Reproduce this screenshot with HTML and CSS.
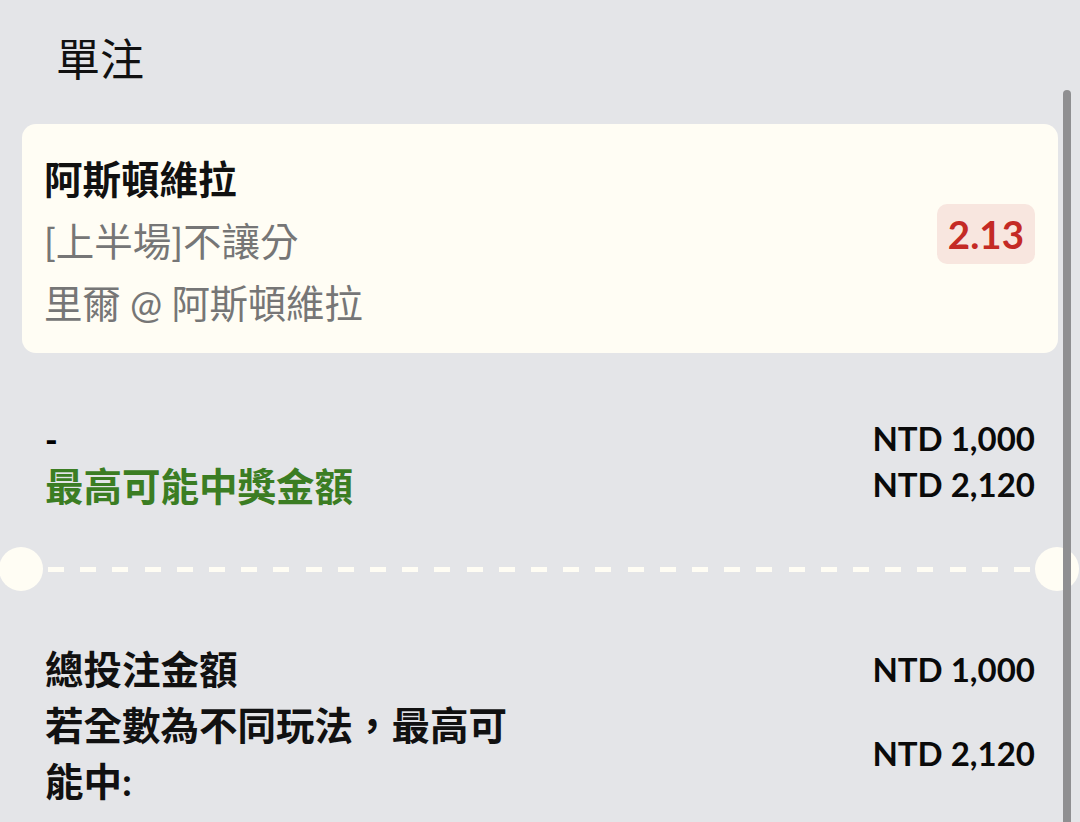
FILE: index.html
```html
<!DOCTYPE html>
<html lang="zh-Hant">
<head>
    <meta charset="UTF-8">
    <meta name="viewport" content="width=device-width, initial-scale=1.0">
    <title>單注</title>
    <link rel="stylesheet" href="styles.css">
</head>
<body>
    <div class="slip">
        <h2 class="slip-title">單注</h2>

        <div class="bet-card">
            <div class="bet-info">
                <div class="bet-pick">阿斯頓維拉</div>
                <div class="bet-market">[上半場]不讓分</div>
                <div class="bet-match">里爾 @ 阿斯頓維拉</div>
            </div>
            <div class="odds">2.13</div>
        </div>

        <div class="stake-rows">
            <div class="stake-label dash">-</div>
            <div class="amount">NTD 1,000</div>
            <div class="stake-label win">最高可能中獎金額</div>
            <div class="amount">NTD 2,120</div>
        </div>

        <div class="divider">
            <span class="notch left"></span>
            <span class="notch right"></span>
        </div>

        <div class="totals">
            <div class="total-label">總投注金額</div>
            <div class="amount">NTD 1,000</div>
            <div class="total-label">若全數為不同玩法，最高可能中:</div>
            <div class="amount">NTD 2,120</div>
        </div>
    </div>

    <!-- overlay scrollbar -->
    <div class="scrollbar"></div>
</body>
</html>
```

FILE: styles.css
```css
body {
    margin: 0;
    background: #e4e5e8;
    font-family: Lato, "Noto Sans CJK TC", sans-serif;
    color: #111;
    overflow: hidden;
}
.slip {
    padding: 0 22px;
}
.slip-title {
    margin: 0 0 34px;
    padding: 28px 0 0 34px;
    font-size: 44px;
    font-weight: 400;
    line-height: 62px;
}
.bet-card {
    display: flex;
    align-items: center;
    justify-content: space-between;
    background: #fffdf4;
    border-radius: 14px;
    padding: 24px 23px 19px 22px;
}
.bet-info {
    font-size: 38.5px;
    line-height: 62px;
    color: #767676;
}
.bet-pick {
    color: #111;
    font-weight: 700;
}
.bet-match {
    letter-spacing: -0.3px;
}
.odds {
    background: #f8e6df;
    color: #c42a25;
    font-weight: 700;
    font-size: 38.5px;
    line-height: 44px;
    padding: 8px 11px;
    border-radius: 10px;
    margin-bottom: 14px;
}
.stake-rows {
    display: grid;
    grid-template-columns: 1fr auto;
    grid-auto-rows: 46px;
    align-items: center;
    margin: 62px 23px 0 23px;
}
.stake-label {
    font-size: 38.5px;
    font-weight: 700;
}
.stake-label.dash {
    font-size: 34px;
    font-weight: 900;
    color: #000;
}
.stake-label.win {
    color: #3b7d23;
}
.amount {
    font-size: 33px;
    font-weight: 700;
    text-align: right;
    color: #0a0a0a;
}
.divider {
    position: relative;
    height: 44px;
    margin: 40px -22px 0;
}
.divider::before {
    content: "";
    position: absolute;
    left: 48px;
    right: 48px;
    top: 20px;
    height: 5px;
    background: repeating-linear-gradient(90deg, #fffdf4 0 16px, transparent 16px 32.2px);
}
.notch {
    position: absolute;
    top: 0;
    width: 44px;
    height: 44px;
    border-radius: 50%;
    background: #fffdf4;
}
.notch.left {
    left: -1px;
}
.notch.right {
    right: 1px;
}
.totals {
    display: grid;
    grid-template-columns: 480px 1fr;
    align-items: center;
    margin: 50px 23px 0 23px;
}
.total-label {
    font-size: 38.5px;
    font-weight: 700;
    line-height: 56px;
}
.scrollbar {
    position: fixed;
    top: 90px;
    bottom: 0;
    right: 9px;
    width: 8px;
    border-radius: 4px 4px 0 0;
    background: #8f8f91;
}
```
